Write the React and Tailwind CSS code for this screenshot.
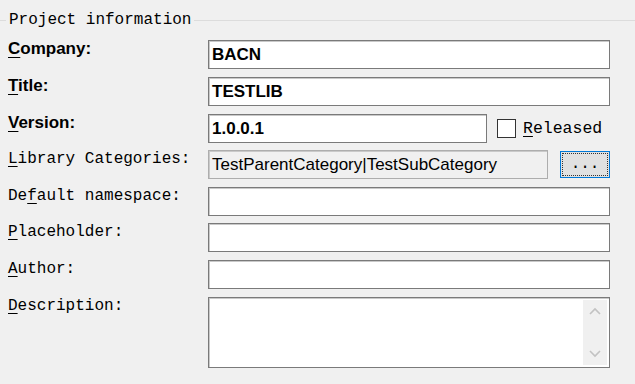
import React from "react";

const mono = { fontFamily: '"Liberation Mono", "Courier New", monospace' };
const sans = { fontFamily: '"Liberation Sans", Arial, sans-serif' };

function Field({ value, bold, width = "w-full", disabled }) {
  return (
    <div
      className={`h-[29px] ${width} border border-[#7a7a7a] shadow-[inset_1px_1px_0_#c9c9c9] flex items-center px-[3px] text-[17px] leading-none text-black ${
        disabled ? "bg-[#f0f0f0] border-[#adadad]" : "bg-white"
      } ${bold ? "font-bold" : ""}`}
      style={sans}
    >
      {value}
    </div>
  );
}

function Mn({ children }) {
  return <span className="underline underline-offset-[3px] decoration-1">{children}</span>;
}

export default function App() {
  const boldLabel = "text-[17px] font-bold leading-[18px] text-black";
  const monoLabel = "text-[16px] leading-[18px] text-black";

  return (
    <div className="w-[635px] h-[384px] bg-[#f0f0f0] overflow-hidden">
      {/* group header */}
      <div className="flex items-center pt-[10px] h-[30px]">
        <div className="w-[6px] h-px bg-[#dcdcdc]" />
        <span className="px-[3px] text-[16px] leading-[18px] text-black" style={mono}>
          Project information
        </span>
        <div className="flex-1 h-px bg-[#dcdcdc]" />
      </div>

      <div className="grid grid-cols-[200px_402px] gap-y-[8px] pl-[8px] pt-[10px]">
        <div className={boldLabel} style={sans}>
          <Mn>C</Mn>ompany:
        </div>
        <Field value="BACN" bold />

        <div className={boldLabel} style={sans}>
          <Mn>T</Mn>itle:
        </div>
        <Field value="TESTLIB" bold />

        <div className={boldLabel} style={sans}>
          <Mn>V</Mn>ersion:
        </div>
        <div className="flex items-center">
          <Field value="1.0.0.1" bold width="w-[279px]" />
          <div className="ml-[10px] w-[19px] h-[19px] border border-[#333] bg-white" />
          <span className={`ml-[7px] text-[16.5px] leading-[18px]`} style={mono}>
            <Mn>R</Mn>eleased
          </span>
        </div>

        <div className={`${monoLabel} -mt-[1px]`} style={mono}>
          <Mn>L</Mn>ibrary Categories:
        </div>
        <div className="flex items-start -mt-[1px]">
          <Field value="TestParentCategory|TestSubCategory" width="w-[341px]" disabled />
          <button className="ml-[12px] mt-[1px] w-[50px] h-[27px] bg-[#e1e1e1] border border-[#0078d7] flex items-center justify-center p-[1px]">
            <span
              className="w-full h-full border border-dotted border-[#333] flex items-end justify-center pb-[3px] text-[16px] leading-none text-black"
              style={mono}
            >
              ...
            </span>
          </button>
        </div>

        <div className={monoLabel} style={mono}>
          De<Mn>f</Mn>ault namespace:
        </div>
        <Field value="" />

        <div className={`${monoLabel} -mt-[1px]`} style={mono}>
          <Mn>P</Mn>laceholder:
        </div>
        <div className="-mt-[1px]">
          <Field value="" />
        </div>

        <div className={monoLabel} style={mono}>
          <Mn>A</Mn>uthor:
        </div>
        <Field value="" />

        <div className={monoLabel} style={mono}>
          <Mn>D</Mn>escription:
        </div>
        <div className="h-[71px] border border-[#7a7a7a] shadow-[inset_1px_1px_0_#c9c9c9] bg-white flex justify-end p-[2px]">
          <div className="w-[24px] h-full bg-[#f0f0f0] flex flex-col items-center justify-between py-[7px]">
            <svg width="12" height="8" viewBox="0 0 12 8" fill="none" stroke="#c2c2c2" strokeWidth="1.6">
              <path d="M1 7 L6 2 L11 7" />
            </svg>
            <svg width="12" height="8" viewBox="0 0 12 8" fill="none" stroke="#c2c2c2" strokeWidth="1.6">
              <path d="M1 1 L6 6 L11 1" />
            </svg>
          </div>
        </div>
      </div>
    </div>
  );
}
